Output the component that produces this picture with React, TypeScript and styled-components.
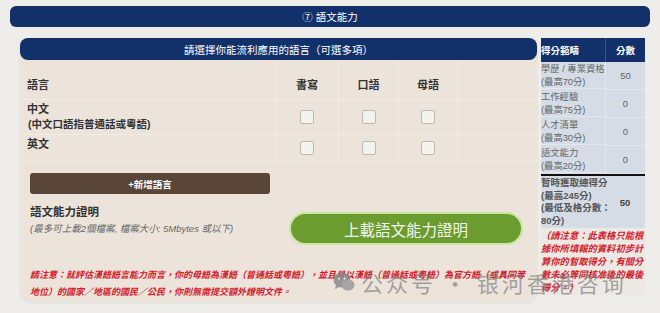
import React from "react";
import styled, { createGlobalStyle } from "styled-components";

const GlobalStyle = createGlobalStyle`
  html, body {
    margin: 0;
    padding: 0;
    background: #efedea;
  }
  body {
    font-family: "Liberation Sans", "Noto Sans CJK TC", sans-serif;
    color: #333;
  }
`;

const languages = [
  { name: "中文", note: "(中文口語指普通話或粵語)", height: 35 },
  { name: "英文", note: "", height: 27 },
];

const scores = [
  { label: "學歷 / 專業資格", max: "(最高70分)", score: "50" },
  { label: "工作經驗", max: "(最高75分)", score: "0" },
  { label: "人才清單", max: "(最高30分)", score: "0" },
  { label: "語文能力", max: "(最高20分)", score: "0" },
];

const App = () => {
  return (
    <Page>
      <GlobalStyle />
      <TopBar>⑦ 語文能力</TopBar>

      <Content>
        <Panel>
          <PanelHeader>請選擇你能流利應用的語言（可選多項）</PanelHeader>

          <LangTable>
            <HeadCell $first>語言</HeadCell>
            <HeadCell $center>書寫</HeadCell>
            <HeadCell $center>口語</HeadCell>
            <HeadCell $center>母語</HeadCell>
            <HeadCell />
            {languages.map((lang) => (
              <React.Fragment key={lang.name}>
                <NameCell style={{ height: lang.height }}>
                  <span>{lang.name}</span>
                  {lang.note && <Note>{lang.note}</Note>}
                </NameCell>
                <BoxCell>
                  <Check />
                </BoxCell>
                <BoxCell>
                  <Check />
                </BoxCell>
                <BoxCell>
                  <Check />
                </BoxCell>
                <BoxCell />
              </React.Fragment>
            ))}
          </LangTable>

          <Lower>
            <AddButton>+新增語言</AddButton>

            <ProofRow>
              <ProofText>
                <ProofTitle>語文能力證明</ProofTitle>
                <ProofHint>(最多可上載2個檔案, 檔案大小: 5Mbytes 或以下)</ProofHint>
              </ProofText>
              <UploadButton>上載語文能力證明</UploadButton>
            </ProofRow>

            <Warning>
              請注意：就評估漢語語言能力而言，你的母語為漢語（普通話或粵語），並且是以漢語（普通話或粵語）為官方語（或具同等地位）的國家／地區的國民／公民，你則無需提交額外證明文件。
            </Warning>
          </Lower>
        </Panel>

        <ScoreTable>
          <ScoreHead>得分範疇</ScoreHead>
          <ScoreHead $center>分數</ScoreHead>
          {scores.map((s) => (
            <React.Fragment key={s.label}>
              <ScoreLabel>
                {s.label}
                <br />
                {s.max}
              </ScoreLabel>
              <ScoreValue>{s.score}</ScoreValue>
            </React.Fragment>
          ))}
          <TotalLabel>
            暫時獲取總得分
            <br />
            (最高245分)
            <br />
            (最低及格分數：
            <br />
            80分)
          </TotalLabel>
          <TotalValue>50</TotalValue>
          <ScoreNote>
            （請注意：此表格只能根據你所填報的資料初步計算你的暫取得分，有關分數未必等同核准後的最後得分。）
          </ScoreNote>
        </ScoreTable>
      </Content>

      <Watermark>
        <svg width="22" height="20" viewBox="0 0 22 20">
          <ellipse cx="9" cy="8" rx="8.5" ry="7.5" fill="#8a8a8a" />
          <path d="M3 13 L2 17 L7 14.5 Z" fill="#8a8a8a" />
          <ellipse cx="15" cy="13" rx="6.5" ry="5.5" fill="#9a9a9a" />
          <circle cx="6" cy="6.5" r="1.1" fill="#efedea" />
          <circle cx="11.5" cy="6.5" r="1.1" fill="#efedea" />
        </svg>
        <span>公众号 · 银河香港咨询</span>
      </Watermark>
    </Page>
  );
};

export default App;

const Page = styled.div`
  position: relative;
  width: 660px;
  height: 313px;
  padding: 6px 10px 0 10px;
  box-sizing: border-box;
  overflow: hidden;
`;

const TopBar = styled.div`
  height: 21px;
  background: #12306a;
  border-radius: 6px;
  color: #fff;
  font-size: 10.5px;
  display: flex;
  align-items: center;
  justify-content: center;
`;

const Content = styled.div`
  display: flex;
  align-items: flex-start;
  gap: 4px;
  margin-top: 11px;
  padding-left: 10px;
`;

const Panel = styled.div`
  width: 517px;
  height: 264px;
  background: #ece4da;
  border-radius: 8px 8px 12px 12px;
  box-shadow: 0 1px 3px rgba(0, 0, 0, 0.08);
  display: flex;
  flex-direction: column;
`;

const PanelHeader = styled.div`
  height: 22px;
  background: #12306a;
  border-radius: 8px;
  color: #fff;
  font-size: 10.5px;
  display: flex;
  align-items: center;
  justify-content: center;
`;

const LangTable = styled.div`
  display: grid;
  grid-template-columns: 255px 63px 60px 59px 1fr;
`;

const HeadCell = styled.div<{ $first?: boolean; $center?: boolean }>`
  height: 40px;
  box-sizing: border-box;
  padding: 8px 0 0 ${({ $first }) => ($first ? "7px" : "0")};
  display: flex;
  align-items: center;
  justify-content: ${({ $center }) => ($center ? "center" : "flex-start")};
  font-size: 11px;
  font-weight: bold;
  color: #333;
  border-bottom: 1px solid #f2ece5;
  border-left: ${({ $first }) => ($first ? "none" : "1px solid #f2ece5")};
`;

const NameCell = styled.div`
  box-sizing: border-box;
  padding: 2px 0 0 7px;
  display: flex;
  flex-direction: column;
  justify-content: flex-start;
  font-size: 11px;
  font-weight: bold;
  line-height: 15px;
  color: #333;
  border-bottom: 1px solid #f2ece5;
`;

const Note = styled.span`
  font-size: 10.5px;
  padding-left: 1px;
`;

const BoxCell = styled.div`
  display: flex;
  align-items: center;
  justify-content: center;
  border-bottom: 1px solid #f2ece5;
  border-left: 1px solid #f2ece5;
`;

const Check = styled.span`
  display: block;
  width: 12px;
  height: 12px;
  border: 1px solid #bdb8b2;
  border-radius: 2px;
  background: #f4f2ef;
`;

const Lower = styled.div`
  display: flex;
  flex-direction: column;
  padding: 0 10px;
`;

const AddButton = styled.div`
  margin-top: 11px;
  width: 240px;
  height: 21px;
  background: #5a4638;
  border-radius: 3px;
  color: #fff;
  font-size: 9.5px;
  font-weight: bold;
  display: flex;
  align-items: center;
  justify-content: center;
`;

const ProofRow = styled.div`
  display: flex;
  align-items: flex-start;
  margin-top: 10px;
`;

const ProofText = styled.div`
  width: 259px;
  display: flex;
  flex-direction: column;
`;

const ProofTitle = styled.div`
  font-size: 11.5px;
  font-weight: bold;
  line-height: 16px;
  color: #333;
`;

const ProofHint = styled.div`
  margin-top: 2px;
  font-size: 9.5px;
  font-style: italic;
  line-height: 14px;
  color: #666;
`;

const UploadButton = styled.div`
  margin-top: 8px;
  width: 234px;
  height: 33px;
  box-sizing: border-box;
  background: #6a9c30;
  border: 2px solid #c9e6a4;
  border-radius: 17px;
  color: #f2f5ee;
  font-size: 15.5px;
  display: flex;
  align-items: center;
  justify-content: center;
`;

const Warning = styled.div`
  margin-top: 22px;
  font-size: 9px;
  line-height: 17px;
  font-weight: bold;
  font-style: italic;
  color: #d0202c;
`;

const ScoreTable = styled.div`
  width: 104px;
  display: grid;
  grid-template-columns: 64px 40px;
  background: #d5dce5;
`;

const ScoreHead = styled.div<{ $center?: boolean }>`
  height: 24px;
  background: #12306a;
  color: #fff;
  font-size: 9.5px;
  font-weight: bold;
  display: flex;
  align-items: center;
  justify-content: ${({ $center }) => ($center ? "center" : "flex-start")};
  border-left: ${({ $center }) => ($center ? "1px solid #3c5485" : "none")};
`;

const ScoreLabel = styled.div`
  height: 27px;
  box-sizing: border-box;
  padding-top: 1px;
  font-size: 9.3px;
  line-height: 12.5px;
  color: #666;
  white-space: nowrap;
  border-bottom: 1px solid #e3e8ee;
`;

const ScoreValue = styled.div`
  height: 27px;
  font-size: 9.5px;
  color: #666;
  display: flex;
  align-items: center;
  justify-content: center;
  border-left: 1px solid #e3e8ee;
  border-bottom: 1px solid #e3e8ee;
`;

const TotalLabel = styled.div`
  border-top: 2px solid #111;
  padding: 1px 0 1px;
  font-size: 9.5px;
  line-height: 12.5px;
  font-weight: bold;
  color: #555;
  white-space: nowrap;
`;

const TotalValue = styled.div`
  border-top: 2px solid #111;
  font-size: 9.5px;
  font-weight: bold;
  color: #444;
  display: flex;
  align-items: center;
  justify-content: center;
`;

const ScoreNote = styled.div`
  grid-column: 1 / span 2;
  background: #ece8e3;
  padding-top: 2px;
  font-size: 9.3px;
  line-height: 13px;
  font-weight: bold;
  font-style: italic;
  color: #d0202c;
`;

const Watermark = styled.div`
  position: absolute;
  left: 333px;
  top: 266px;
  display: flex;
  align-items: center;
  gap: 6px;
  color: rgba(120, 120, 120, 0.75);
  font-family: "Noto Sans CJK SC", sans-serif;
  font-size: 22px;
  letter-spacing: 3px;
  pointer-events: none;
  opacity: 0.85;
`;
